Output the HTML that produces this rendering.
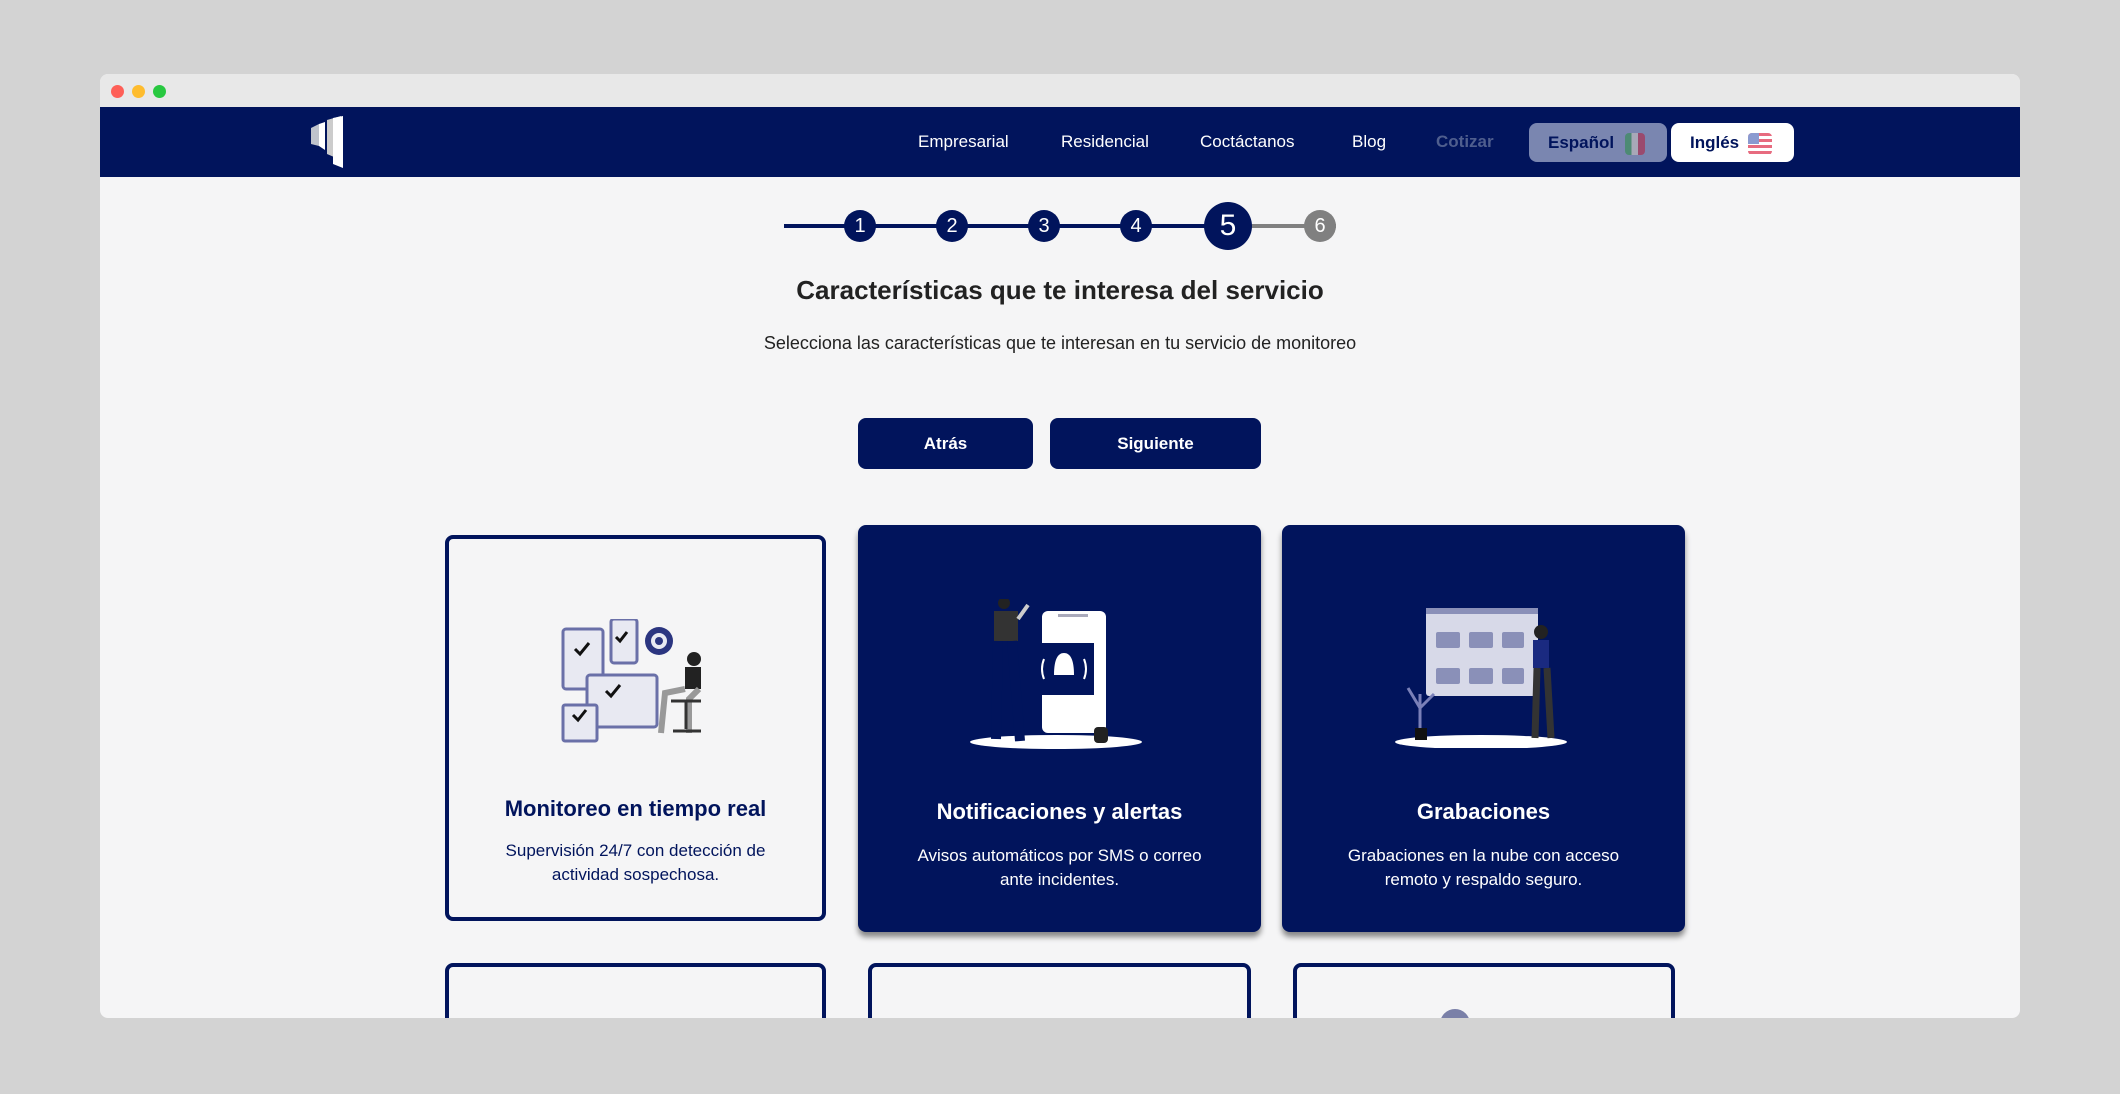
<!DOCTYPE html>
<html><head><meta charset="utf-8">
<style>
*{margin:0;padding:0;box-sizing:border-box}
body{width:2120px;height:1094px;background:#d3d3d3;font-family:"Liberation Sans",sans-serif;position:relative;overflow:hidden}
.win{position:absolute;left:100px;top:74px;width:1920px;height:944px;background:#f5f5f6;border-radius:8px;overflow:hidden}
.tb{position:absolute;left:0;top:0;width:100%;height:33px;background:#e8e8e8}
.dot{position:absolute;top:11px;width:13px;height:13px;border-radius:50%}
.nav{position:absolute;left:0;top:33px;width:100%;height:70px;background:#01145c}
.ni{position:absolute;top:25px;color:#fff;font-size:17px}
.abs{position:absolute}
.c{position:absolute;border-radius:50%;color:#fff;text-align:center;font-size:20px}
.btn{position:absolute;background:#01145c;color:#fff;border-radius:8px;font-weight:bold;font-size:17px;text-align:center;line-height:51px}
.card{position:absolute;border-radius:8px;text-align:center}
.wc{border:4px solid #01145c;background:#f5f5f6;color:#01145c}
.dc{background:#01145c;color:#fff;box-shadow:0 5px 6px rgba(0,0,0,.45)}
.ct{position:absolute;left:0;width:100%;font-weight:bold;font-size:22px}
.cd{position:absolute;left:0;width:100%;font-size:17px;line-height:24px}
</style></head><body>
<div class="win">
<div class="tb">
<div class="dot" style="left:11px;background:#fe5f57"></div>
<div class="dot" style="left:32px;background:#febc2e"></div>
<div class="dot" style="left:53px;background:#28c840"></div>
</div>
<div class="nav">
<svg class="abs" style="left:211px;top:9px" width="46" height="52" viewBox="0 0 46 52"><polygon points="0,12 8,8 8,30 0,28" fill="#bfc3cc"/><polygon points="8,8 14,6 14,34 8,30" fill="#fff"/><polygon points="16,4 30,0 30,44 16,38" fill="#ccc"/><polygon points="22,2 32,0 32,52 22,48" fill="#fff"/></svg>
<div class="ni" style="left:818px">Empresarial</div>
<div class="ni" style="left:961px">Residencial</div>
<div class="ni" style="left:1100px">Coctáctanos</div>
<div class="ni" style="left:1252px">Blog</div>
<div class="ni" style="left:1336px;color:#4f5e8e;font-weight:bold">Cotizar</div>
<div class="abs" style="left:1429px;top:16px;width:138px;height:39px;background:#7a86b0;border-radius:8px;color:#01145c;font-weight:bold;font-size:17px;line-height:39px;padding-left:19px">Español <span style="display:inline-block;vertical-align:middle;width:20px;height:22px;border-radius:4px;background:linear-gradient(90deg,#4d8a74 33%,#a8a8b8 33% 66%,#9a4a6e 66%);margin-left:6px"></span></div>
<div class="abs" style="left:1571px;top:16px;width:123px;height:39px;background:#fff;border-radius:8px;color:#01145c;font-weight:bold;font-size:17px;line-height:39px;padding-left:19px">Inglés <span style="display:inline-block;vertical-align:middle;width:24px;height:22px;border-radius:4px;background:repeating-linear-gradient(180deg,#e76b7f 0 3px,#fff 3px 6px);position:relative;margin-left:4px"><span style="position:absolute;left:0;top:0;width:11px;height:11px;background:#8a9ad0;border-radius:4px 0 0 0"></span></span></div>
</div>
<div class="abs" style="left:684px;top:150px;width:552px;height:4px;background:#01145c"></div>
<div class="abs" style="left:1128px;top:150px;width:108px;height:4px;background:#808080"></div>
<div class="c" style="left:744px;top:136px;width:32px;height:32px;line-height:32px;background:#01145c">1</div>
<div class="c" style="left:836px;top:136px;width:32px;height:32px;line-height:32px;background:#01145c">2</div>
<div class="c" style="left:928px;top:136px;width:32px;height:32px;line-height:32px;background:#01145c">3</div>
<div class="c" style="left:1020px;top:136px;width:32px;height:32px;line-height:32px;background:#01145c">4</div>
<div class="c" style="left:1104px;top:128px;width:48px;height:48px;line-height:48px;background:#01145c;font-size:30px">5</div>
<div class="c" style="left:1204px;top:136px;width:32px;height:32px;line-height:32px;background:#808080">6</div>
<div class="abs" style="left:0;width:100%;top:201px;text-align:center;font-weight:bold;font-size:26px;color:#222">Características que te interesa del servicio</div>
<div class="abs" style="left:0;width:100%;top:259px;text-align:center;font-size:18px;color:#222">Selecciona las características que te interesan en tu servicio de monitoreo</div>
<div class="btn" style="left:758px;top:344px;width:175px;height:51px">Atrás</div>
<div class="btn" style="left:950px;top:344px;width:211px;height:51px">Siguiente</div>

<div class="card wc" style="left:345px;top:461px;width:381px;height:386px">
<svg class="abs" style="left:112px;top:80px" width="154" height="126" viewBox="0 0 154 126"><rect x="2" y="10" width="40" height="60" rx="3" fill="#e8e9f2" stroke="#6a70a8" stroke-width="3"/><rect x="50" y="0" width="26" height="44" rx="3" fill="#e8e9f2" stroke="#6a70a8" stroke-width="3"/><rect x="26" y="56" width="70" height="52" rx="3" fill="#e8e9f2" stroke="#6a70a8" stroke-width="3"/><rect x="2" y="86" width="34" height="36" rx="2" fill="#e8e9f2" stroke="#6a70a8" stroke-width="3"/><circle cx="98" cy="22" r="14" fill="#2b3580"/><circle cx="98" cy="22" r="8" fill="#e8e9f2"/><circle cx="98" cy="22" r="4" fill="#2b3580"/><path d="M14 30l5 5 9-11M55 18l4 4 7-9M45 72l5 5 9-11M12 96l5 5 8-10" stroke="#111" stroke-width="3" fill="none"/><circle cx="133" cy="40" r="7" fill="#222"/><rect x="124" y="48" width="16" height="22" fill="#222"/><path d="M124 70l-20 4-4 40M138 70l-10 10 0 34" stroke="#999" stroke-width="6" fill="none"/><path d="M110 82h30M125 82v28M112 112h28" stroke="#333" stroke-width="3"/></svg>
<div class="ct" style="top:257px">Monitoreo en tiempo real</div>
<div class="cd" style="top:300px">Supervisión 24/7 con detección de<br>actividad sospechosa.</div>
</div>

<div class="card dc" style="left:758px;top:451px;width:403px;height:407px">
<svg class="abs" style="left:112px;top:74px" width="172" height="150" viewBox="0 0 172 150"><ellipse cx="86" cy="143" rx="86" ry="7" fill="#fff"/><rect x="72" y="12" width="64" height="122" rx="6" fill="#fff"/><rect x="88" y="15" width="30" height="3" fill="#aab"/><rect x="64" y="44" width="60" height="52" fill="#01145c"/><path d="M84 76c0-16 4-22 10-22s10 6 10 22z" fill="#fff"/><path d="M74 60q-4 10 0 20M114 60q4 10 0 20" stroke="#fff" stroke-width="2" fill="none"/><rect x="124" y="128" width="14" height="16" rx="4" fill="#222"/><circle cx="34" cy="4" r="6" fill="#222"/><rect x="24" y="12" width="24" height="30" fill="#333"/><path d="M48 20l10-14" stroke="#ccc" stroke-width="4"/><path d="M28 42l-2 98M42 42l8 100" stroke="#01145c" stroke-width="10"/></svg>
<div class="ct" style="top:274px">Notificaciones y alertas</div>
<div class="cd" style="top:319px">Avisos automáticos por SMS o correo<br>ante incidentes.</div>
</div>

<div class="card dc" style="left:1182px;top:451px;width:403px;height:407px">
<svg class="abs" style="left:113px;top:83px" width="174" height="140" viewBox="0 0 174 140"><ellipse cx="86" cy="134" rx="86" ry="7" fill="#fff"/><rect x="31" y="0" width="112" height="88" rx="3" fill="#d7d9e8"/><rect x="31" y="0" width="112" height="6" fill="#8a90b8"/><g fill="#8a90b8"><rect x="41" y="24" width="24" height="16" rx="2"/><rect x="74" y="24" width="24" height="16" rx="2"/><rect x="107" y="24" width="22" height="16" rx="2"/><rect x="41" y="60" width="24" height="16" rx="2"/><rect x="74" y="60" width="24" height="16" rx="2"/><rect x="107" y="60" width="22" height="16" rx="2"/></g><circle cx="146" cy="24" r="7" fill="#222"/><rect x="138" y="32" width="16" height="28" fill="#1a2a80"/><path d="M142 60l-2 70M152 60l4 70" stroke="#333" stroke-width="7"/><path d="M25 126l0-40M25 100l-12-20M25 100l14-14" stroke="#7a80b8" stroke-width="3"/><rect x="20" y="120" width="12" height="12" fill="#111"/></svg>
<div class="ct" style="top:274px">Grabaciones</div>
<div class="cd" style="top:319px">Grabaciones en la nube con acceso<br>remoto y respaldo seguro.</div>
</div>

<div class="card wc" style="left:345px;top:889px;width:381px;height:120px"></div>
<div class="card wc" style="left:768px;top:889px;width:383px;height:120px"></div>
<div class="card wc" style="left:1193px;top:889px;width:382px;height:120px"><div class="abs" style="left:143px;top:42px;width:30px;height:30px;border-radius:50%;background:#7a80a8"></div></div>
</div>
</body></html>
